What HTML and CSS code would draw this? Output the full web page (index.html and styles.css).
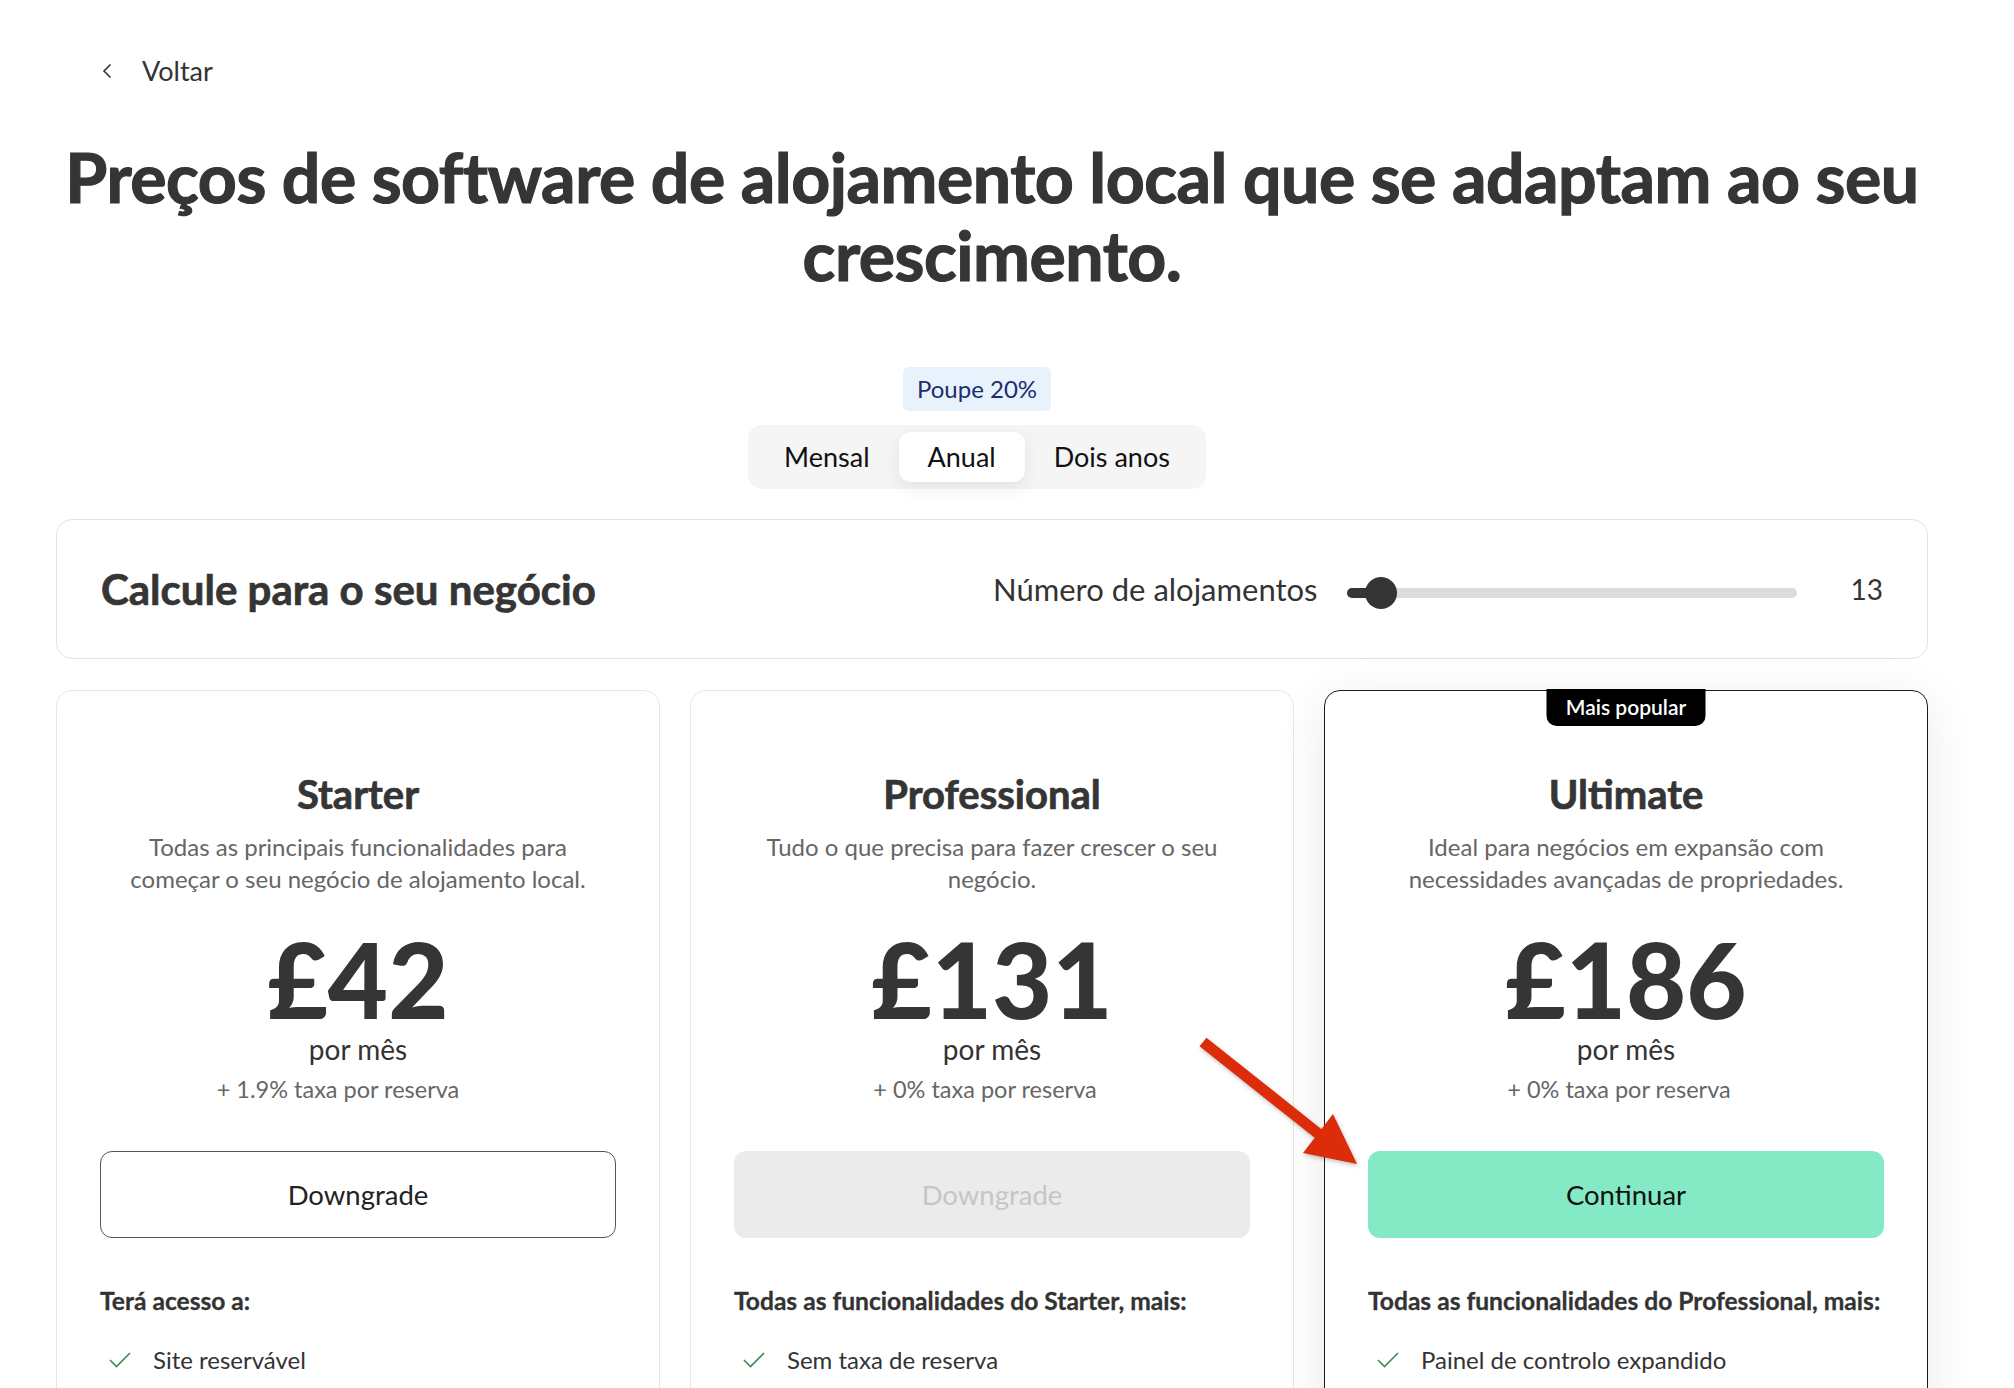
FILE: index.html
```html
<!DOCTYPE html>
<html lang="pt">
<head>
    <meta charset="UTF-8">
    <meta name="viewport" content="width=device-width, initial-scale=1.0">
    <title>Preços</title>
    <link rel="stylesheet" href="styles.css">
</head>
<body>
    <div class="page">

        <!-- Voltar -->
        <a class="back" href="#">
            <svg class="back-icon" width="10" height="16" viewBox="0 0 10 16"><path d="M8.5 1.5 L2 8 L8.5 14.5" fill="none" stroke="#333" stroke-width="1.6"/></svg>
            <span>Voltar</span>
        </a>

        <h1 class="title">Preços de software de alojamento local que se adaptam ao seu crescimento.</h1>

        <!-- Periodo -->
        <div class="period">
            <span class="save">Poupe 20%</span>
            <div class="toggle">
                <span class="toggle-item">Mensal</span>
                <span class="toggle-item active">Anual</span>
                <span class="toggle-item">Dois anos</span>
            </div>
        </div>

        <!-- Calculadora -->
        <div class="calc">
            <h2>Calcule para o seu negócio</h2>
            <div class="calc-control">
                <span class="calc-label">Número de alojamentos</span>
                <div class="track">
                    <div class="track-fill"></div>
                    <div class="thumb"></div>
                </div>
                <span class="calc-value">13</span>
            </div>
        </div>

        <!-- Planos -->
        <div class="plans">
            <div class="plan">
                <h3>Starter</h3>
                <p class="desc">Todas as principais funcionalidades para começar o seu negócio de alojamento local.</p>
                <div class="price">£42</div>
                <div class="per">por mês</div>
                <div class="fee fee-wide">+ 1.9% taxa por reserva</div>
                <button class="btn btn-outline">Downgrade</button>
                <p class="features-title">Terá acesso a:</p>
                <ul class="features">
                    <li><svg class="check" width="24" height="18" viewBox="0 0 24 18"><path d="M2 9 L8.5 15.5 L22 2" fill="none" stroke="#3f8b52" stroke-width="1.6"/></svg>Site reservável</li>
                </ul>
            </div>

            <div class="plan">
                <h3>Professional</h3>
                <p class="desc">Tudo o que precisa para fazer crescer o seu negócio.</p>
                <div class="price">£131</div>
                <div class="per">por mês</div>
                <div class="fee">+ 0% taxa por reserva</div>
                <button class="btn btn-disabled">Downgrade</button>
                <p class="features-title">Todas as funcionalidades do Starter, mais:</p>
                <ul class="features">
                    <li><svg class="check" width="24" height="18" viewBox="0 0 24 18"><path d="M2 9 L8.5 15.5 L22 2" fill="none" stroke="#3f8b52" stroke-width="1.6"/></svg>Sem taxa de reserva</li>
                </ul>
            </div>

            <div class="plan popular">
                <span class="popular-tag">Mais popular</span>
                <h3>Ultimate</h3>
                <p class="desc">Ideal para negócios em expansão com necessidades avançadas de propriedades.</p>
                <div class="price">£186</div>
                <div class="per">por mês</div>
                <div class="fee">+ 0% taxa por reserva</div>
                <button class="btn btn-primary">Continuar</button>
                <p class="features-title">Todas as funcionalidades do Professional, mais:</p>
                <ul class="features">
                    <li><svg class="check" width="24" height="18" viewBox="0 0 24 18"><path d="M2 9 L8.5 15.5 L22 2" fill="none" stroke="#3f8b52" stroke-width="1.6"/></svg>Painel de controlo expandido</li>
                </ul>
            </div>

            <!-- Seta de destaque -->
            <svg class="arrow" width="180" height="145" viewBox="0 0 180 145">
                <line x1="13" y1="12" x2="130" y2="105" stroke="#dc2c0a" stroke-width="11"/>
                <polygon points="143,84 113,123 167,134" fill="#dc2c0a"/>
            </svg>
        </div>
    </div>
</body>
</html>
```

FILE: styles.css
```css
/* Estilos gerais */
* {
    box-sizing: border-box;
}

body {
    margin: 0;
    font-family: Lato, "Open Sans", sans-serif;
    color: #333;
    background: #fff;
}

.page {
    width: 1872px;
    margin-left: 56px;
}

.back {
    display: flex;
    align-items: center;
    gap: 30px;
    padding: 53px 0 0 46px;
    color: #333;
    text-decoration: none;
    font-size: 27px;
    line-height: 36px;
}

.title {
    margin: 49px 0 0;
    text-align: center;
    font-size: 68px;
    line-height: 78px;
    font-weight: 700;
    color: #353535;
    letter-spacing: -0.5px;
    -webkit-text-stroke: 1.2px #353535;
}

/* Periodo */
.period {
    display: flex;
    flex-direction: column;
    align-items: center;
    margin: 73px 30px 0 0;
}

.save {
    padding: 0 14px;
    height: 44px;
    line-height: 44px;
    background: #e8f2fd;
    color: #1d2d6e;
    font-size: 24px;
    border-radius: 6px;
}

.toggle {
    display: flex;
    margin-top: 14px;
    padding: 7px;
    background: #f5f5f5;
    border-radius: 14px;
}

.toggle-item {
    padding: 0 29px;
    height: 50px;
    line-height: 50px;
    font-size: 27px;
    color: #111;
}

.toggle-item.active {
    background: #fff;
    border-radius: 12px;
    box-shadow: 0 6px 18px rgba(0, 0, 0, 0.08);
}

/* Calculadora */
.calc {
    display: flex;
    justify-content: space-between;
    align-items: center;
    height: 140px;
    margin-top: 30px;
    padding: 0 44px;
    border: 1px solid #e2e2e2;
    border-radius: 16px;
}

.calc h2 {
    margin: 0;
    font-size: 42px;
    line-height: 48px;
    font-weight: 700;
    color: #353535;
    -webkit-text-stroke: 0.7px #353535;
}

.calc-control {
    display: flex;
    align-items: center;
}

.calc-label {
    font-size: 31px;
    color: #333;
    margin-right: 29px;
}

.track {
    position: relative;
    width: 450px;
    height: 10px;
    margin-top: 8px;
    background: #dcdcdc;
    border-radius: 5px;
}

.track-fill {
    width: 34px;
    height: 10px;
    background: #353535;
    border-radius: 5px 0 0 5px;
}

.thumb {
    position: absolute;
    left: 18px;
    top: -11px;
    width: 32px;
    height: 32px;
    border-radius: 50%;
    background: #353535;
}

.calc-value {
    margin-left: 54px;
    font-size: 28px;
    color: #333;
}

/* Planos */
.plans {
    position: relative;
    display: grid;
    grid-template-columns: repeat(3, 1fr);
    gap: 30px;
    margin-top: 31px;
}

.plan {
    position: relative;
    padding: 79px 43px 80px;
    border: 1px solid #e6e6e6;
    border-radius: 16px;
    text-align: center;
    background: #fff;
}

.plan.popular {
    border: 1.5px solid #1c1c1c;
    box-shadow: 0 10px 50px rgba(0, 0, 0, 0.09);
}

.popular-tag {
    position: absolute;
    top: -2px;
    left: 50%;
    transform: translateX(-50%);
    width: 159px;
    height: 37px;
    line-height: 35px;
    background: #000;
    color: #fff;
    font-size: 21px;
    font-weight: 600;
    border-radius: 0 0 10px 10px;
}

.plan h3 {
    margin: 0;
    font-size: 40px;
    line-height: 48px;
    font-weight: 700;
    color: #353535;
    -webkit-text-stroke: 0.7px #353535;
}

.desc {
    margin: 13px 0 0;
    padding: 0 22px;
    font-size: 24px;
    line-height: 32px;
    color: #666;
}

.price {
    margin-top: 38px;
    font-size: 104px;
    line-height: 92px;
    font-weight: 900;
    color: #353535;
}

.per {
    margin-top: 6px;
    font-size: 28px;
    line-height: 36px;
    color: #333;
}

.fee {
    margin-top: 6px;
    padding-right: 14px;
    font-size: 23.5px;
    line-height: 32px;
    color: #666;
}

.fee-wide {
    padding-right: 40px;
}

.btn {
    display: block;
    width: 100%;
    height: 87px;
    margin-top: 46px;
    font-family: inherit;
    font-size: 27.5px;
    border-radius: 12px;
    cursor: pointer;
}

.btn-outline {
    background: #fff;
    border: 1px solid #555;
    color: #222;
}

.btn-disabled {
    background: #ebebeb;
    border: none;
    color: #c6c6c6;
}

.btn-primary {
    background: #84e9c5;
    border: none;
    color: #111;
}

.features-title {
    margin: 47px 0 0;
    text-align: left;
    font-size: 24.6px;
    line-height: 32px;
    font-weight: 700;
    color: #333;
    -webkit-text-stroke: 0.3px #333;
}

.features {
    list-style: none;
    margin: 27px 0 0;
    padding: 0;
    text-align: left;
}

.features li {
    display: flex;
    align-items: center;
    gap: 21px;
    padding-left: 8px;
    font-size: 24px;
    line-height: 32px;
    color: #333;
}

.arrow {
    position: absolute;
    left: 1134px;
    top: 340px;
    filter: drop-shadow(1px 2px 2px rgba(0, 0, 0, 0.25));
}
```
